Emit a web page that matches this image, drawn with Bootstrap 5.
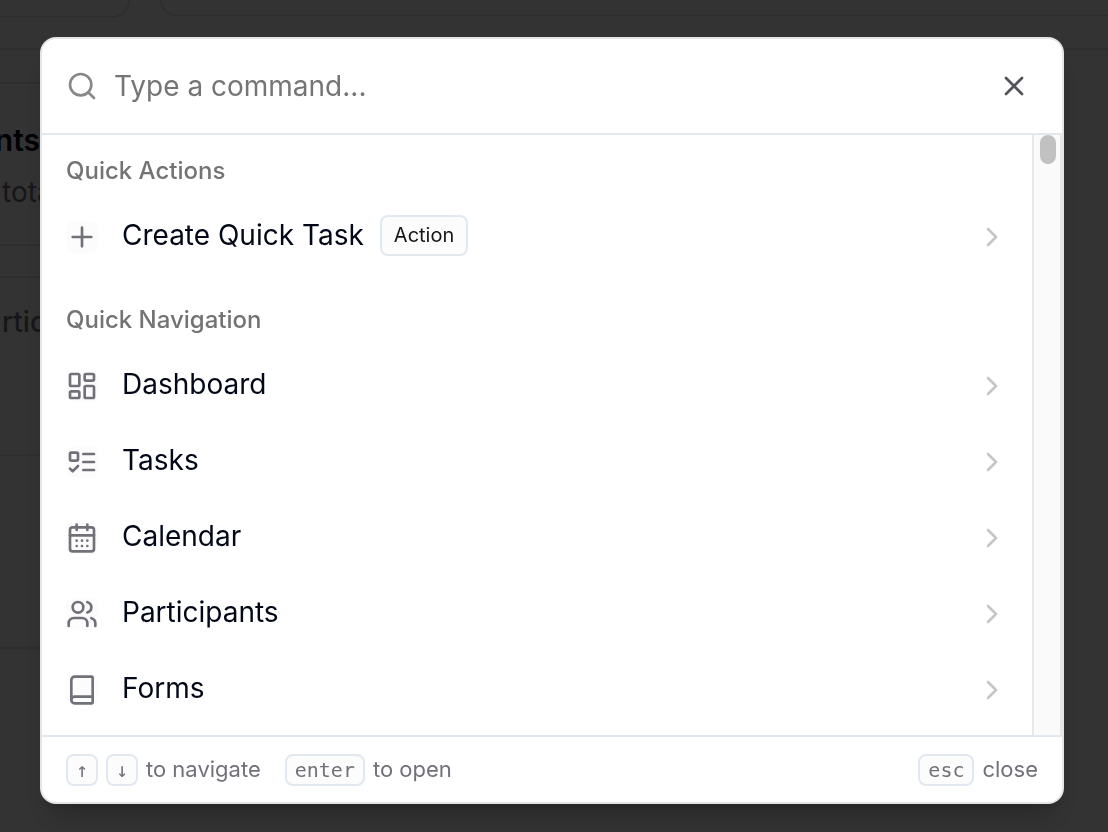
<!DOCTYPE html>
<html lang="en">
<head>
<meta charset="utf-8">
<meta name="viewport" content="width=device-width, initial-scale=1">
<title>Command menu</title>
<link href="https://cdn.jsdelivr.net/npm/bootstrap@5.3.0/dist/css/bootstrap.min.css" rel="stylesheet">
<style>
  body { font-family: Inter, "Liberation Sans", sans-serif; background: #fff; color: #020817; overflow: hidden; }
  svg { fill: none; stroke: currentColor; stroke-width: 2; stroke-linecap: round; stroke-linejoin: round; width: 32px; height: 32px; flex-shrink: 0; display: block; }

  /* page behind the dialog */
  .page-behind { height: 100vh; overflow: hidden; }
  .top-strip { height: 51px; border-bottom: 3px solid #e4ebe8; gap: 30px; }
  .pill-a { width: 130px; height: 18px; border: 2px solid #e4e4e7; border-width: 0 2px 2px 0; border-bottom-right-radius: 32px; }
  .pill-b { height: 16px; border: 2px solid #e4e4e7; border-width: 0 0 2px 2px; border-bottom-left-radius: 20px; }
  .side-card { border: 2px solid #e4e4e7; border-width: 2px 0; }
  .side-one { height: 164px; margin-top: 31px; padding-top: 32px; }
  .side-two { height: 180px; margin-top: 30px; padding-top: 24px; }
  .side-three { height: 194px; border-bottom: 4px solid #e8e8ea; }
  .side-title { width: 40px; font-size: 30px; line-height: 48px; font-weight: 600; }
  .side-note { font-size: 28px; line-height: 40px; color: #71717a; margin-top: 8px; padding-left: 2px; }

  .overlay { background: rgba(0, 0, 0, .8); padding: 37px 44px 28px 40px; }
  .palette { background: #fff; border: 2px solid #e5e5e5; border-radius: 16px; overflow: hidden; box-shadow: 0 20px 30px -6px rgba(0, 0, 0, .2), 0 8px 12px -8px rgba(0, 0, 0, .2); }
  .palette-head { height: 96px; padding: 0 32px 0 24px; border-bottom: 2px solid #e2e8f0; gap: 16px; color: #888; }
  .command-input { font-size: 28px; line-height: 40px; color: #020817; outline: 0; min-width: 0; }
  .command-input::placeholder { color: #757575; opacity: 1; }
  .close-btn { color: #52525b; }

  .palette-body { height: 600px; }
  .scroll-area { padding: 8px 0 7px; }
  .cmd-group + .cmd-group { margin-top: 17px; }
  .group-title { font-size: 24px; line-height: 32px; font-weight: 500; color: #737373; padding: 12px 24px; margin: 0; }
  .cmd-row { height: 76px; padding: 0 24px; color: #020817; font-size: 28px; line-height: 40px; gap: 24px; }
  .cmd-row:hover { color: #020817; }
  .cmd-icon { background: #fcfcfc; border-radius: 8px; color: #71717a; }
  .cmd-label { padding-bottom: 4px; gap: 16px; }
  .cmd-chevron { color: #c6c6ca; margin-left: auto; }
  .tag { font-size: 20px; line-height: 28px; font-weight: 400; color: #171717; background: #fcfcfc; border: 2px solid #e2e8f0; border-radius: 8px; padding: 4px 12px 5px; }
  .track { width: 30px; background: #fafafa; border: 2px solid #e8e8e8; border-width: 0 2px; padding: 0 4px 0 6px; }
  .thumb { height: 29px; background: #c1c1c1; border-radius: 8px; }

  .palette-foot { height: 67px; border-top: 2px solid #e2e8f0; padding: 0 24px; font-size: 22px; line-height: 32px; color: #71717a; }
  .key-hint { padding-bottom: 2px; }
  .key { font-family: "DejaVu Sans Mono", monospace; font-size: 20px; line-height: 28px; height: 32px; min-width: 32px; padding: 0 8px; border: 2px solid #e2e8f0; border-radius: 8px; background: #fcfcfc; color: #71717a; text-align: center; }
  .key-arrow { padding: 0; }
</style>
</head>
<body>
<div class="page-behind" aria-hidden="true">
  <div class="top-strip d-flex align-items-start">
    <div class="pill-a"></div>
    <div class="pill-b flex-grow-1"></div>
  </div>
  <div class="w-50">
    <div class="side-card side-one">
      <div class="side-title d-flex justify-content-end">nts</div>
      <div class="side-note">tota</div>
    </div>
    <div class="side-card side-two">
      <div class="side-note fw-medium m-0">rtic</div>
    </div>
    <div class="side-three"></div>
  </div>
</div>

<div class="overlay position-fixed top-0 start-0 w-100 h-100">
  <div class="palette" role="dialog" aria-label="Command menu">
    <div class="palette-head d-flex align-items-center">
      <svg viewBox="0 0 24 24"><circle cx="11" cy="11" r="8"/><path d="m21 21-4.3-4.3"/></svg>
      <input class="command-input flex-grow-1 border-0 bg-transparent p-0" type="text" placeholder="Type a command..." aria-label="Type a command">
      <button class="close-btn btn p-0 border-0" type="button" aria-label="Close"><svg viewBox="0 0 24 24"><path d="M18 6 6 18M6 6l12 12"/></svg></button>
    </div>

    <div class="palette-body d-flex">
      <div class="scroll-area flex-grow-1">
        <section class="cmd-group">
          <h2 class="group-title">Quick Actions</h2>
          <a href="#" class="cmd-row d-flex align-items-center text-decoration-none">
            <svg class="cmd-icon" viewBox="0 0 24 24"><path d="M5 12h14M12 5v14"/></svg>
            <span class="cmd-label d-flex align-items-center">Create Quick Task <span class="tag">Action</span></span>
            <svg class="cmd-chevron" viewBox="0 0 24 24"><path d="m9 18 6-6-6-6"/></svg>
          </a>
        </section>
        <section class="cmd-group">
          <h2 class="group-title">Quick Navigation</h2>
          <a href="#" class="cmd-row d-flex align-items-center text-decoration-none">
            <svg class="cmd-icon" viewBox="0 0 24 24"><rect width="7" height="9" x="3" y="3" rx="1"/><rect width="7" height="5" x="14" y="3" rx="1"/><rect width="7" height="9" x="14" y="12" rx="1"/><rect width="7" height="5" x="3" y="16" rx="1"/></svg>
            <span class="cmd-label">Dashboard</span>
            <svg class="cmd-chevron" viewBox="0 0 24 24"><path d="m9 18 6-6-6-6"/></svg>
          </a>
          <a href="#" class="cmd-row d-flex align-items-center text-decoration-none">
            <svg class="cmd-icon" viewBox="0 0 24 24"><rect x="3" y="5" width="6" height="6" rx="1"/><path d="m3 17 2 2 4-4M13 6h8M13 12h8M13 18h8"/></svg>
            <span class="cmd-label">Tasks</span>
            <svg class="cmd-chevron" viewBox="0 0 24 24"><path d="m9 18 6-6-6-6"/></svg>
          </a>
          <a href="#" class="cmd-row d-flex align-items-center text-decoration-none">
            <svg class="cmd-icon" viewBox="0 0 24 24"><path d="M8 2v4M16 2v4"/><rect width="18" height="18" x="3" y="4" rx="2"/><path d="M3 10h18M8 14h.01M12 14h.01M16 14h.01M8 18h.01M12 18h.01M16 18h.01"/></svg>
            <span class="cmd-label">Calendar</span>
            <svg class="cmd-chevron" viewBox="0 0 24 24"><path d="m9 18 6-6-6-6"/></svg>
          </a>
          <a href="#" class="cmd-row d-flex align-items-center text-decoration-none">
            <svg class="cmd-icon overflow-visible" viewBox="0 0 24 24"><path d="M16 21v-2a4 4 0 0 0-4-4H6a4 4 0 0 0-4 4v2"/><circle cx="9" cy="7" r="4"/><path d="M22 21v-2a4 4 0 0 0-3-3.87M16 3.13a4 4 0 0 1 0 7.75"/></svg>
            <span class="cmd-label">Participants</span>
            <svg class="cmd-chevron" viewBox="0 0 24 24"><path d="m9 18 6-6-6-6"/></svg>
          </a>
          <a href="#" class="cmd-row d-flex align-items-center text-decoration-none">
            <svg class="cmd-icon" viewBox="0 0 24 24"><path d="M4 19.5v-15A2.5 2.5 0 0 1 6.5 2H19a1 1 0 0 1 1 1v18a1 1 0 0 1-1 1H6.5a1 1 0 0 1 0-5H20"/></svg>
            <span class="cmd-label">Forms</span>
            <svg class="cmd-chevron" viewBox="0 0 24 24"><path d="m9 18 6-6-6-6"/></svg>
          </a>
        </section>
      </div>
      <div class="track flex-shrink-0"><div class="thumb"></div></div>
    </div>

    <div class="palette-foot d-flex align-items-center justify-content-between">
      <div class="d-flex align-items-center gap-4">
        <div class="d-flex align-items-center gap-2"><kbd class="key key-arrow">↑</kbd><kbd class="key key-arrow">↓</kbd><span class="key-hint">to navigate</span></div>
        <div class="d-flex align-items-center gap-2"><kbd class="key">enter</kbd><span class="key-hint">to open</span></div>
      </div>
      <div class="d-flex align-items-center gap-2"><kbd class="key">esc</kbd><span class="key-hint">close</span></div>
    </div>
  </div>
</div>
<script src="https://cdn.jsdelivr.net/npm/bootstrap@5.3.0/dist/js/bootstrap.bundle.min.js"></script>
</body>
</html>
